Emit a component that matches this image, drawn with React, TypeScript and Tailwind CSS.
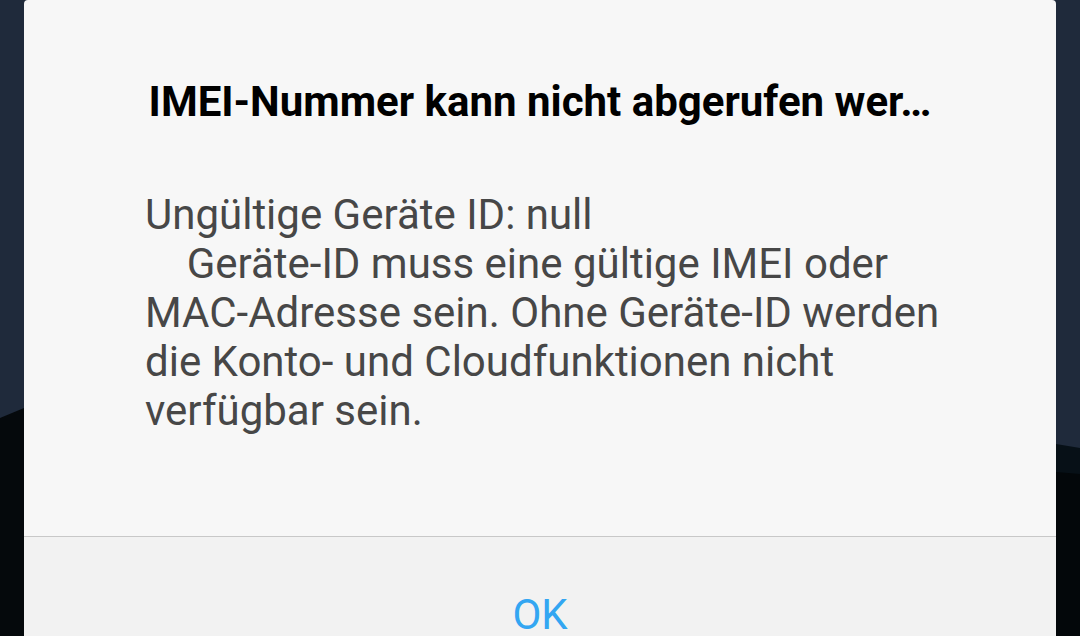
import React from "react";

const bodyLines = [
  "Ungültige Geräte ID: null",
  "    Geräte-ID muss eine gültige IMEI oder",
  "MAC-Adresse sein. Ohne Geräte-ID werden",
  "die Konto- und Cloudfunktionen nicht",
  "verfügbar sein.",
];

const Wallpaper: React.FC = () => (
  <svg
    className="absolute inset-0"
    width="1080"
    height="636"
    viewBox="0 0 1080 636"
    preserveAspectRatio="none"
  >
    <rect width="1080" height="636" fill="#1f2a3b" />
    <path d="M0 418 L24 408 L24 636 L0 636 Z" fill="#05090c" />
    <path d="M1056 444 L1080 448 L1080 636 L1056 636 Z" fill="#071017" />
    <path d="M1056 472 L1080 474 L1080 636 L1056 636 Z" fill="#03070a" />
  </svg>
);

const App: React.FC = () => {
  return (
    <div
      className="relative w-[1080px] h-[636px] overflow-hidden"
      style={{ fontFamily: "Roboto, 'Noto Sans', sans-serif" }}
    >
      <Wallpaper />
      <div className="relative mx-[24px] h-full flex flex-col bg-[#f7f7f7] rounded-t-[4px] overflow-hidden">
        <h1 className="pt-[77px] text-center text-[42px] leading-[50px] font-bold text-black whitespace-nowrap">
          IMEI-Nummer kann nicht abgerufen wer…
        </h1>

        <div className="mt-[63px] pl-[121px] text-[42px] leading-[49px] text-[#474747]">
          {bodyLines.map((line, i) => (
            <p key={i} className="whitespace-pre">
              {line}
            </p>
          ))}
        </div>

        <div className="mt-[101px] flex-1 border-t border-[#c8c8c8] bg-[#f2f2f2]">
          <div className="pt-[54px] text-center text-[42px] leading-[48px] text-[#33a6f2]">
            OK
          </div>
        </div>
      </div>
    </div>
  );
};

export default App;
